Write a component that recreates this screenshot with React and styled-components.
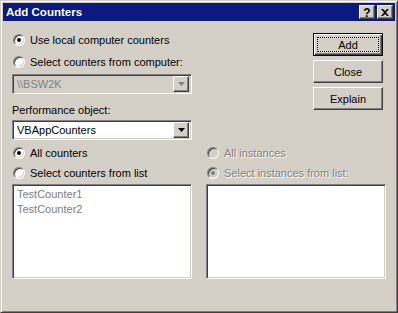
import React from 'react';
import styled, { createGlobalStyle, css } from 'styled-components';

const GlobalStyle = createGlobalStyle`
  html, body {
    margin: 0;
    padding: 0;
    background: #d4d0c8;
  }
  * {
    box-sizing: border-box;
  }
`;

const sunken = css`
  border: 1px solid;
  border-color: #808080 #ffffff #ffffff #808080;
  box-shadow: inset 1px 1px #404040, inset -1px -1px #d4d0c8;
`;

const raised = css`
  border: 1px solid;
  border-color: #ffffff #404040 #404040 #ffffff;
  box-shadow: inset -1px -1px #808080, inset 1px 1px #d4d0c8;
`;

const Window = styled.div`
  width: 398px;
  height: 313px;
  display: flex;
  flex-direction: column;
  padding: 2px;
  background: #d4d0c8;
  border: 1px solid;
  border-color: #d4d0c8 #404040 #404040 #d4d0c8;
  box-shadow: inset 1px 1px #ffffff, inset -1px -1px #808080;
  font-family: "Liberation Sans", Arial, sans-serif;
  font-size: 11px;
  color: #000;
`;

const TitleBar = styled.div`
  height: 18px;
  background: #0a1a80;
  display: flex;
  align-items: center;
  padding: 0 2px 0 3px;
`;

const Title = styled.div`
  flex: 1;
  color: #fff;
  font-weight: bold;
  font-size: 11.5px;
`;

const CaptionButton = styled.div`
  width: 16px;
  height: 14px;
  margin-left: ${p => p.$gap || 0}px;
  background: #d4d0c8;
  ${raised};
  display: flex;
  align-items: center;
  justify-content: center;
  font-weight: bold;
  font-size: 12px;
  line-height: 1;
  padding-top: 1px;
`;

const Body = styled.div`
  flex: 1;
  display: flex;
  flex-direction: column;
  padding: 11px 9px 0 9px;
`;

const Top = styled.div`
  display: flex;
  justify-content: space-between;
`;

const Column = styled.div`
  width: 180px;
  display: flex;
  flex-direction: column;
`;

const ButtonColumn = styled.div`
  width: 70px;
  margin-right: 3px;
  margin-top: 1px;
  display: flex;
  flex-direction: column;
  gap: 4px;
`;

const Button = styled.div`
  height: 23px;
  display: flex;
  align-items: center;
  justify-content: center;
  background: #d4d0c8;
  position: relative;
  ${p => p.$default
    ? css`
      border: 1px solid #000;
      box-shadow: inset 1px 1px #ffffff, inset -1px -1px #404040, inset -2px -2px #808080;
      &::after {
        content: '';
        position: absolute;
        inset: 3px;
        border: 1px dotted #000;
      }
    `
    : raised}
`;

const Row = styled.label`
  height: 16px;
  display: flex;
  align-items: center;
  gap: 5px;
  margin-top: ${p => p.$mt || 0}px;
  padding-left: 1px;
  color: ${p => (p.$disabled ? '#808080' : '#000')};
  text-shadow: ${p => (p.$disabled ? '1px 1px #ffffff' : 'none')};
`;

const Label = styled.div`
  height: 16px;
  display: flex;
  align-items: center;
  margin-top: ${p => p.$mt || 0}px;
`;

const Radio = styled.span`
  width: 12px;
  height: 12px;
  border-radius: 50%;
  flex: none;
  position: relative;
  border: 1px solid;
  border-color: #808080 #ffffff #ffffff #808080;
  box-shadow: inset 1px 1px #404040, inset -1px -1px #d4d0c8;
  background: ${p => (p.$disabled ? '#d4d0c8' : '#ffffff')};
  ${p => p.$checked && css`
    &::after {
      content: '';
      position: absolute;
      left: 3px;
      top: 3px;
      width: 4px;
      height: 4px;
      border-radius: 50%;
      background: ${p.$disabled ? '#808080' : '#000'};
    }
  `}
`;

const Combo = styled.div`
  height: 20px;
  margin-top: ${p => p.$mt || 0}px;
  ${sunken};
  background: ${p => (p.$disabled ? '#d4d0c8' : '#ffffff')};
  color: ${p => (p.$disabled ? '#808080' : '#000')};
  display: flex;
  align-items: center;
  padding: 2px;
`;

const ComboText = styled.div`
  flex: 1;
  padding-left: 2px;
`;

const DropButton = styled.div`
  width: 16px;
  height: 16px;
  background: #d4d0c8;
  ${raised};
  display: flex;
  align-items: center;
  justify-content: center;
`;

const Bottom = styled.div`
  display: flex;
  justify-content: space-between;
  margin-top: 5px;
`;

const ListBox = styled.div`
  height: 95px;
  margin-top: 3px;
  background: #fff;
  ${sunken};
  padding: 2px 4px;
  color: #808080;
  line-height: 15px;
`;

const Arrow = ({ color }) => (
  <svg width="7" height="4" viewBox="0 0 7 4">
    <path d="M0 0h7L3.5 4z" fill={color} />
  </svg>
);

const CloseGlyph = () => (
  <svg width="8" height="7" viewBox="0 0 8 7">
    <path d="M0 0h2l2 2 2-2h2L5 3.5 8 7H6L4 5 2 7H0l3-3.5z" fill="#000" />
  </svg>
);

const App = () => (
  <>
    <GlobalStyle />
    <Window>
      <TitleBar>
        <Title>Add Counters</Title>
        <CaptionButton>?</CaptionButton>
        <CaptionButton $gap={2}><CloseGlyph /></CaptionButton>
      </TitleBar>
      <Body>
        <Top>
          <Column>
            <Row><Radio $checked />Use local computer counters</Row>
            <Row $mt={6}><Radio />Select counters from computer:</Row>
            <Combo $mt={4} $disabled>
              <ComboText>\\BSW2K</ComboText>
              <DropButton><Arrow color="#808080" /></DropButton>
            </Combo>
            <Label $mt={8}>Performance object:</Label>
            <Combo $mt={2}>
              <ComboText>VBAppCounters</ComboText>
              <DropButton><Arrow color="#000" /></DropButton>
            </Combo>
          </Column>
          <ButtonColumn>
            <Button $default>Add</Button>
            <Button>Close</Button>
            <Button>Explain</Button>
          </ButtonColumn>
        </Top>
        <Bottom>
          <Column>
            <Row><Radio $checked />All counters</Row>
            <Row $mt={4}><Radio />Select counters from list</Row>
            <ListBox>
              <div>TestCounter1</div>
              <div>TestCounter2</div>
            </ListBox>
          </Column>
          <Column>
            <Row $disabled><Radio $disabled />All instances</Row>
            <Row $mt={4} $disabled><Radio $disabled $checked />Select instances from list:</Row>
            <ListBox />
          </Column>
        </Bottom>
      </Body>
    </Window>
  </>
);

export default App;
